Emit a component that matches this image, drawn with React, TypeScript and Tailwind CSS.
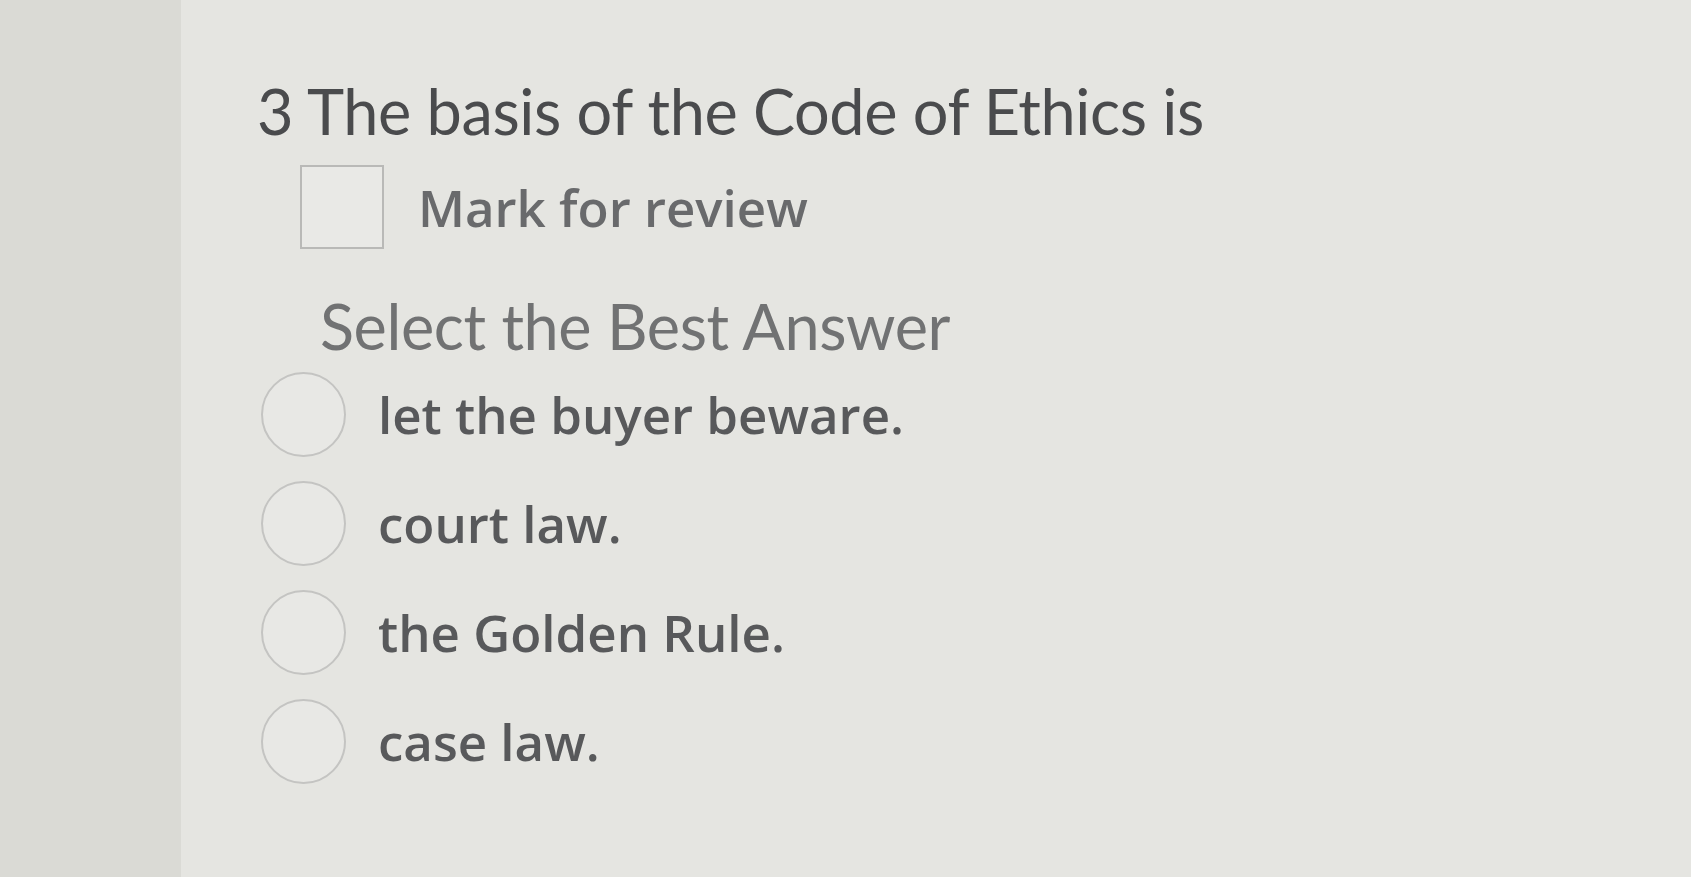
import { useState } from 'react';
import { Check } from 'lucide-react';

const options = ['let the buyer beware.', 'court law.', 'the Golden Rule.', 'case law.'];

export default function App() {
  const [marked, setMarked] = useState(false);
  const [picked, setPicked] = useState<number | null>(null);

  return (
    <div className="flex h-screen w-full overflow-hidden bg-[#e5e5e1]">
      <div className="w-[181px] shrink-0 bg-[#dadad5]" />

      <main className="flex-1 pl-[76px] pt-[79px]">
        <h1 className="text-[63px] leading-none font-normal tracking-[-0.4px] text-[#4a4b4d] [font-family:Lato,sans-serif]">
          3 The basis of the Code of Ethics is
        </h1>

        <label className="mt-[23px] ml-[43px] flex cursor-pointer items-center gap-[34px]">
          <input
            type="checkbox"
            checked={marked}
            onChange={() => setMarked(!marked)}
            className="sr-only"
          />
          <span className="flex h-[84px] w-[84px] items-center justify-center border-2 border-[#b9b9b7] bg-[#e9e9e6]">
            {marked && <Check className="h-[60px] w-[60px] text-[#555]" strokeWidth={3} />}
          </span>
          <span className="text-[51px] leading-none font-semibold text-[#696a6c] [font-family:'Open_Sans',sans-serif]">
            Mark for review
          </span>
        </label>

        <h2 className="mt-[45px] ml-[63px] text-[63px] leading-none font-normal tracking-[-0.4px] text-[#717273] [font-family:Lato,sans-serif]">
          Select the Best Answer
        </h2>

        <div className="mt-[15px] ml-[4px] flex flex-col gap-[24px]">
          {options.map((opt, i) => (
            <label key={opt} className="flex cursor-pointer items-center gap-[32px]">
              <input
                type="radio"
                name="answer"
                checked={picked === i}
                onChange={() => setPicked(i)}
                className="sr-only"
              />
              <span className="flex h-[85px] w-[85px] items-center justify-center rounded-full border-2 border-[#c4c4c2] bg-[#e8e8e5]">
                {picked === i && <span className="h-[40px] w-[40px] rounded-full bg-[#555]" />}
              </span>
              <span className="text-[51px] leading-none font-semibold text-[#58595b] [font-family:'Open_Sans',sans-serif]">
                {opt}
              </span>
            </label>
          ))}
        </div>
      </main>
    </div>
  );
}
